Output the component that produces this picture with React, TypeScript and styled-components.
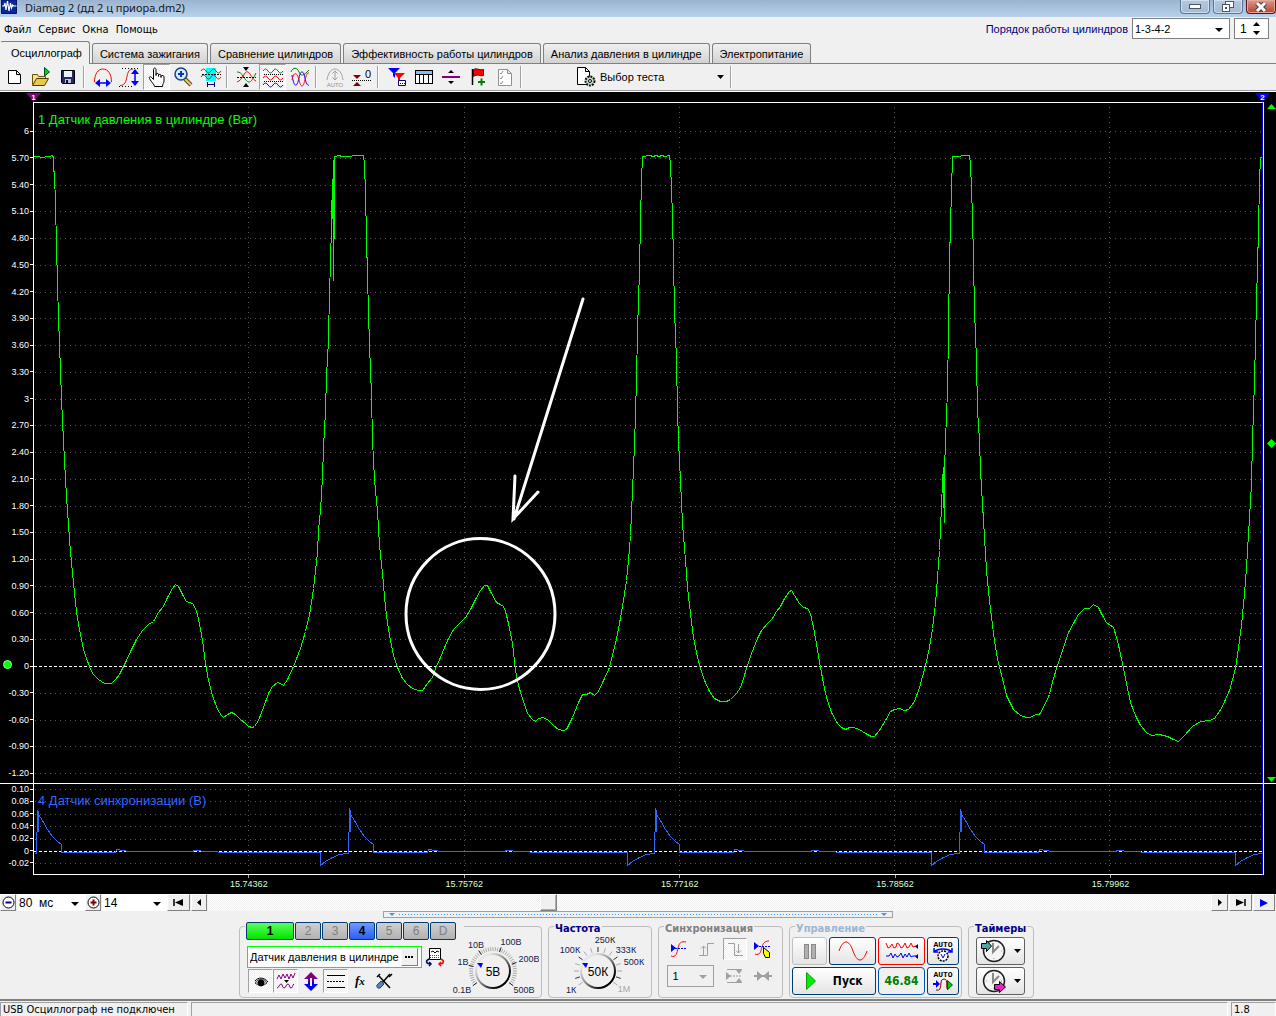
import React, { useState } from 'react';
import styled, { createGlobalStyle, css } from 'styled-components';

const ui = '"Liberation Sans", Arial, sans-serif';
const tahoma = '"DejaVu Sans Condensed", "Noto Sans", Tahoma, sans-serif';
const hatch = css`
  background: conic-gradient(#fff 25%, #efefef 0 50%, #fff 0 75%, #efefef 0) 0 0 / 2px 2px;
`;

const GlobalStyle = createGlobalStyle`
  *, *::before, *::after { box-sizing: border-box; }
  body { margin: 0; background: #f0f0f0; }
  button, input, select { font: inherit; color: inherit; margin: 0; padding: 0; border-radius: 0; }
`;

/* ---------- window frame ---------- */
const Window = styled.div`
  display: flex;
  flex-direction: column;
  height: 100vh;
  overflow: hidden;
  background: #f0f0f0;
  color: #000;
  font: 11px/14px ${ui};
`;
const TitleBar = styled.header`
  display: flex;
  flex: none;
  height: 17px;
  padding-left: 1px;
  gap: 8px;
  background: linear-gradient(#9ab4d0, #b9d1ea);
`;
const Title = styled.h1`
  flex: 1;
  margin: 0;
  font: 11px/15px "Noto Sans", sans-serif;
  color: #16161c;
`;
const WindowButtons = styled.div`
  display: flex;
  gap: 3px;
`;
const WindowButton = styled.button<{ $close?: boolean }>`
  display: flex;
  align-items: center;
  justify-content: center;
  width: 30px;
  height: 14px;
  border: 1px solid ${p => (p.$close ? '#5a1420' : '#5d7590')};
  border-top: 0;
  border-radius: 0 0 4px 4px;
  box-shadow: inset 0 0 0 1px ${p => (p.$close ? '#e5a79b' : '#cfdfef')};
  background: ${p => (p.$close ? 'linear-gradient(#dc9b8d, #b8412f)' : 'linear-gradient(#b4c8de, #a3bbd5)')};
`;

const MenuRow = styled.div`
  display: flex;
  flex: none;
  justify-content: space-between;
  height: 24px;
  padding: 1px 7px 0 0;
`;
const Menu = styled.nav`
  display: flex;
`;
const MenuItem = styled.button`
  border: 0;
  padding: 0 3px 0 4px;
  background: none;
  font: 11px/24px ${tahoma};
`;
const OrderBar = styled.div`
  display: flex;
  gap: 4px;
  height: 21px;
  label { color: #000080; line-height: 22px; font-size: 11px; }
`;
const Combo = styled.div<{ $w: number; $flat?: boolean; $disabled?: boolean }>`
  position: relative;
  width: ${p => p.$w}px;
  border: ${p => (p.$flat ? '0' : `1px solid ${p.$disabled ? '#a0a0a0' : '#7f7f7f'}`)};
  background: ${p => (p.$disabled ? '#f0f0f0' : '#fff')};
  select {
    appearance: none;
    width: 100%;
    height: 100%;
    padding-left: ${p => (p.$disabled ? 5 : 2)}px;
    border: 0;
    background: none;
    opacity: 1;
    color: #000;
  }
  &::after {
    content: '';
    position: absolute;
    right: 6px;
    top: 50%;
    border: 4px solid transparent;
    border-top-color: ${p => (p.$disabled ? '#a0a0a0' : '#000')};
    border-bottom: 0;
    margin-top: -1px;
    pointer-events: none;
  }
`;
const Spinner = styled.div`
  display: flex;
  align-items: center;
  width: 35px;
  border: 1px solid #7f7f7f;
  background: #fff;
  input {
    width: 18px;
    border: 0;
    padding-left: 5px;
    background: none;
    appearance: textfield;
    font-size: 12px;
  }
  input::-webkit-inner-spin-button { appearance: none; }
`;
const SpinButtons = styled.div`
  display: flex;
  flex-direction: column;
`;
const SpinButton = styled.button`
  display: block;
  height: 9px;
  border: 0;
  background: none;
  line-height: 0;
`;

/* ---------- tabs ---------- */
const TabList = styled.div`
  display: flex;
  flex: none;
  align-items: flex-end;
  height: 23px;
  gap: 2px;
  border-bottom: 1px solid #808080;
`;
const Tab = styled.button<{ $active?: boolean }>`
  height: ${p => (p.$active ? 23 : 20)}px;
  padding: ${p => (p.$active ? '0 7px 0 10px' : '0 7px')};
  margin-bottom: ${p => (p.$active ? -1 : 0)}px;
  border: 1px solid #808080;
  border-bottom: 0;
  border-left-color: ${p => (p.$active ? '#f0f0f0' : '#808080')};
  border-radius: 3px 3px 0 0;
  background: ${p => (p.$active ? '#f0f0f0' : 'linear-gradient(#f0f0f0, #d2d2d2)')};
  white-space: nowrap;
  line-height: 18px;
`;

/* ---------- toolbar ---------- */
const Toolbar = styled.div`
  display: flex;
  flex: none;
  height: 28px;
  border-bottom: 1px solid #fff;
  box-shadow: inset 0 -1px #a0a0a0;
  padding-bottom: 1px;
`;
const ToolGroup = styled.div`
  display: flex;
  padding-right: 7px;
  margin-right: 1px;
  background: linear-gradient(90deg, #a0a0a0 1px, #fff 1px) right 3px center / 2px 22px no-repeat;
`;
const ToolButton = styled.button<{ $pressed?: boolean; $w?: number }>`
  display: flex;
  align-items: center;
  justify-content: center;
  width: ${p => p.$w ?? 27}px;
  border: 1px solid transparent;
  background: none;
  ${p => p.$pressed && css`
    ${hatch}
    border-color: #a0a0a0 #fff #fff #a0a0a0;
  `}
`;
const TestPicker = styled.button`
  display: flex;
  align-items: center;
  gap: 4px;
  width: 162px;
  margin-left: 44px;
  padding: 0 8px 0 6px;
  border: 0;
  background: linear-gradient(90deg, #a0a0a0 1px, #fff 1px) right 0 center / 2px 22px no-repeat;
  span { flex: 1; text-align: left; }
`;

/* ---------- scope ---------- */
const Scope = styled.main`
  display: flex;
  flex: 1;
  flex-direction: column;
  min-height: 300px;
  background: #000;
`;
const MarkerRow = styled.div`
  display: flex;
  flex: none;
  justify-content: space-between;
  height: 10px;
  padding: 1px 6px 0 26px;
`;
const Pane = styled.section<{ $share: number; $divided?: boolean }>`
  display: flex;
  flex: ${p => p.$share} 1 0;
  min-height: 0;
  border-top: ${p => (p.$divided ? '1px solid #fff' : '0')};
`;
const Axis = styled.ol<{ $top: number; $bottom: number }>`
  position: relative;
  display: flex;
  flex: none;
  flex-direction: column;
  justify-content: space-between;
  width: 34px;
  margin: 0;
  padding: ${p => p.$top}px 0 ${p => p.$bottom}px;
  border-right: 1px solid #fff;
  list-style: none;
  color: #fff;
  font: 9px/10px ${ui};
`;
const AxisLabel = styled.li`
  display: flex;
  align-items: center;
  justify-content: flex-end;
  gap: 1px;
  height: 10px;
  &::after { content: ''; width: 3px; height: 1px; background: #fff; }
`;
const ZeroDot = styled.span`
  position: absolute;
  left: 3px;
  top: 82%;
  width: 9px;
  height: 9px;
  border: 1px solid #9dff9d;
  border-radius: 50%;
  background: #0f0;
`;
const Plot = styled.div<{ $top?: boolean }>`
  position: relative;
  flex: 1;
  min-width: 0;
  border-top: ${p => (p.$top ? '1px solid #fff' : '0')};
  border-bottom: ${p => (p.$top ? '0' : '1px solid #fff')};
  border-right: 1px solid #0000ff;
  svg { display: block; width: 100%; height: 100%; }
`;
const PlotTitle = styled.h2<{ $color: string }>`
  position: absolute;
  left: 4px;
  top: 9px;
  margin: 0;
  font: 13px/16px ${ui};
  color: ${p => p.$color};
`;
const Strip = styled.div`
  display: flex;
  flex: none;
  flex-direction: column;
  justify-content: space-between;
  align-items: flex-end;
  width: 13px;
  padding: 2px 0 0;
  border-left: 1px solid #fff;
  svg { display: block; }
`;
const TimeAxis = styled.ol`
  display: flex;
  flex: none;
  height: 19px;
  margin: 0 13px 0 34px;
  padding: 0 0 0 8.4%;
  list-style: none;
  color: #d8ffd8;
  font: 9px/12px ${ui};
`;
const TimeLabel = styled.li`
  flex: none;
  width: 19.2%;
  text-align: center;
  &::before { content: ''; display: block; width: 1px; height: 3px; margin: 0 auto; background: #aaa; }
`;

/* ---------- scroll row ---------- */
const ScrollRow = styled.div`
  display: flex;
  flex: none;
  height: 17px;
  font-size: 12px;
`;
const SmallButton = styled.button<{ $w: number }>`
  display: flex;
  align-items: center;
  justify-content: center;
  width: ${p => p.$w}px;
  margin-right: 1px;
  border: 1px solid;
  border-color: #fff #808080 #808080 #fff;
  background: #f0f0f0;
`;
const TrackRange = styled.input`
  appearance: none;
  flex: 1;
  min-width: 0;
  height: 17px;
  outline: 0;
  ${hatch}
  &::-webkit-slider-thumb {
    appearance: none;
    width: 17px;
    height: 17px;
    border: 1px solid;
    border-color: #fff #808080 #808080 #fff;
    box-shadow: inset -1px -1px #b0b0b0;
    background: #f0f0f0;
  }
`;

/* ---------- control dock ---------- */
const Collapse = styled.button`
  display: flex;
  flex: none;
  align-items: center;
  align-self: center;
  justify-content: space-between;
  width: 40%;
  height: 7px;
  padding: 0 5px;
  border: 1px solid #a0a0a0;
  background: #f0f0f0;
  &::before, &::after {
    content: '';
    border: 3px solid transparent;
    border-top-color: #3399ff;
    border-bottom: 0;
  }
  span {
    flex: 1;
    height: 1px;
    margin: 0 4px;
    background: repeating-linear-gradient(90deg, #3399ff 0 1px, transparent 1px 3px);
  }
`;
const Dock = styled.div`
  display: flex;
  flex: none;
  justify-content: center;
  gap: 6px;
  padding: 8px 3px 1px 0;
  border-bottom: 2px solid #808080;
`;
const Group = styled.fieldset<{ $w: number }>`
  width: ${p => p.$w}px;
  height: 72px;
  min-width: 0;
  margin: 0;
  padding: 0;
  border: 1px solid #bdbdbd;
  border-radius: 4px;
`;
const Legend = styled.legend<{ $color?: string }>`
  height: 1px;
  margin-left: 5px;
  padding: 0 1px;
  font: bold 11px/5px "DejaVu Sans Condensed", sans-serif;
  color: ${p => p.$color ?? '#000080'};
`;
const ChannelBar = styled.div`
  display: flex;
  gap: 1px;
  margin-top: -4px;
  padding-right: 7px;
`;
const Channel = styled.button<{ $kind?: 'green' | 'blue' }>`
  width: ${p => (p.$kind === 'green' ? 48 : 26)}px;
  height: 18px;
  border: 1px solid #003c74;
  border-radius: 2px;
  background: ${p =>
    p.$kind === 'green' ? 'linear-gradient(#5cff5c, #00e400)'
    : p.$kind === 'blue' ? 'linear-gradient(#6f9bff, #2a5df5)'
    : 'linear-gradient(#cfcfcf, #b2b2b2)'};
  color: ${p => (p.$kind ? '#000' : '#808080')};
  font: ${p => (p.$kind ? 'bold' : 'normal')} 12px/16px ${ui};
`;
const ChannelBody = styled.div`
  display: flex;
  height: 100%;
`;
const ChannelLeft = styled.div`
  display: flex;
  flex-direction: column;
  width: 205px;
  padding: 19px 0 0 7px;
`;
const NameRow = styled.div`
  display: flex;
  gap: 3px;
`;
const NameBox = styled.div`
  display: flex;
  align-items: center;
  width: 178px;
  height: 22px;
  padding: 2px;
  border: 1px solid #00ff00;
  background: #fff;
  input {
    flex: 1;
    width: 0;
    border: 0;
    background: none;
    font: 11px/16px ${ui};
  }
`;
const PlainButton = styled.button`
  display: flex;
  align-items: center;
  justify-content: center;
  border: 0;
  background: none;
`;
const IconRow = styled.div`
  display: flex;
  height: 25px;
  padding: 1px 0 0 1px;
`;
const KnobArt = styled.svg`
  flex: none;
  display: block;
  margin: -1px 0;
  font: 9px ${ui};
  text-anchor: middle;
`;
const SyncGrid = styled.div`
  display: grid;
  grid-template-columns: repeat(4, 24px);
  column-gap: 4px;
  row-gap: 5px;
  justify-content: center;
  padding-top: 11px;
`;
const Wide = styled.div`
  display: flex;
  grid-column: span 2;
  height: 22px;
  margin-right: 4px;
`;
const ControlGrid = styled.div`
  display: grid;
  grid-template-columns: 35px 47px 47px 32px;
  grid-template-rows: 28px 28px;
  gap: 2px;
  padding: 10px 0 0 2px;
`;
const TimerStack = styled.div`
  display: grid;
  grid-template-rows: 28px 28px;
  gap: 2px;
  padding: 10px 8px 0 7px;
`;
const XpButton = styled.button<{ $span?: number; $line?: string }>`
  display: flex;
  align-items: center;
  justify-content: center;
  gap: 8px;
  grid-column: span ${p => p.$span ?? 1};
  border: 1px solid ${p => p.$line ?? '#003c74'};
  border-radius: 3px;
  background: linear-gradient(#fff, #e4e4e4);
  font: bold 12px/16px "DejaVu Sans Condensed", sans-serif;
`;
const Reading = styled.output`
  display: flex;
  align-items: center;
  justify-content: center;
  border: 1px solid #0054b0;
  border-radius: 4px;
  color: #008000;
  font: bold 12px/16px "DejaVu Sans Condensed", sans-serif;
`;
const StatusBar = styled.footer`
  display: flex;
  flex: none;
  gap: 3px;
  height: 15px;
  padding-top: 1px;
  overflow: hidden;
  font: 11px/14px ${tahoma};
`;
const StatusCell = styled.div<{ $w?: number }>`
  flex: ${p => (p.$w ? `0 0 ${p.$w}px` : '1')};
  padding-left: 2px;
  border-top: 1px solid #a0a0a0;
  border-left: 1px solid #a0a0a0;
  border-right: 1px solid #fff;
  white-space: nowrap;
`;

/* ---------- icons ---------- */
type IconProps = { children: React.ReactNode; size?: number; h?: number; crisp?: boolean };
const Icon = ({ children, size = 24, h, crisp }: IconProps) => (
  <svg width={size} height={h ?? size} viewBox={`0 0 ${size} ${h ?? size}`} fill="none" stroke="#000"
    shapeRendering={crisp ? 'crispEdges' : undefined} aria-hidden="true">{children}</svg>
);
const wave = (y: number, a = 4) => `M2 ${y}q2.5 ${-a} 5 0t5 0t5 0t5 0`;

const icons = {
  create: <Icon><path fill="#fff" d="M6.5 5.5h8l4 4v9h-12z M14.5 5.500v4h4" /></Icon>,
  open: <Icon><path fill="#f5e28a" stroke="#6b5200" d="M3.5 19.5v-10h5l1 2h7v3" /><path fill="#e8c94a" stroke="#4d3b00" d="M3.5 20.5l4-7h12l-4 7z" /><path fill="#00d020" stroke="#064d10" d="M15.5 2.5l5 4.5-5 4z" /></Icon>,
  save: <Icon><path fill="#26266e" d="M5.5 5.5h13v13h-12l-1-1z" /><path stroke="none" fill="#e8f0f8" d="M8 6h8v6H8z" /><path stroke="none" fill="#b8c4d8" d="M9 14h6v4H9z" /><path stroke="none" fill="#111" d="M10 15h2v3h-2z" /></Icon>,
  period: <Icon><path stroke="#f00" d="M3.5 17C3.500 9 7 4 12 4s8.5 5 8.5 13" /><path stroke="#00f" strokeWidth="1.5" d="M6 18h12" /><path fill="#00f" stroke="none" d="M4 18l5-4v8zM20 18l-5-4v8z" /></Icon>,
  amplitude: <Icon><path strokeDasharray="1 2" d="M4 3.5h18M1 21.5h14" /><path stroke="#f00" d="M2 20.5c5 0 6-4 7-9s2-7 6-7.5" /><path stroke="#00f" strokeWidth="1.5" d="M17 6v13" /><path fill="#00f" stroke="none" d="M17 4l4 5h-8zM17 21l4-5h-8z" /></Icon>,
  hand: <Icon><path fill="#fff" d="M8.5 14.5V4.5c0-2 2.500-2 2.500 0v6-1c0-1.5 2.5-1.5 2.5 0v2-1c0-1.5 2.5-1.5 2.5 0v2-1c0-1.5 3-1.5 3 .5v4c0 2-1.5 3-1.5 5.500h-8c0-2-3-4-5-8-1-2 1.5-2.5 2.5-.5z" /></Icon>,
  zoom: <Icon><path stroke="#5a4510" strokeWidth="4" d="M13 14l6 6" /><path stroke="#f0cf66" strokeWidth="2" d="M13 14l6 6" /><circle cx="9" cy="9" r="6" fill="#d7ecff" stroke="#1d3f80" strokeWidth="1.5" /><path stroke="#003bb0" strokeWidth="2" d="M6 9h6M9 6v6" /></Icon>,
  window: <Icon><path fill="#00ffff" stroke="none" d="M7 3h10v13H7z" /><path stroke="#008000" d={wave(6)} /><path stroke="#f00" d={wave(12)} /><path strokeDasharray="2 1" d="M3 9.5h19" /><path stroke="#000080" d="M8.500 17v5M15.500 17v5M8 19.500h8" /></Icon>,
  compress: <Icon><path stroke="#008000" d="M3 7c3 0 4 1 6 4s4 6 6 6 4-3 7-9" /><path stroke="#f00" d="M3 17c3-1 4-3 6-6s3-5 5-4 5 8 8 9" /><path strokeDasharray="2 1" d="M3 12.5h19" /><path fill="#000" stroke="none" d="M9 2h6l-3 4zM9 22h6l-3-4z" /></Icon>,
  separate: <Icon><path stroke="#008000" d={wave(6)} /><path stroke="#f00" d={wave(13)} /><path stroke="#00f" d={wave(20)} /><path strokeDasharray="1 1" d="M3 9.5h19M3 16.5h19" /></Icon>,
  overlay: <Icon><path stroke="#008000" d="M3 7c2-5 6-5 8 0s5 3 8 0l2-2" /><path stroke="#00f" d="M4 10c2 13 5 13 7 3s5-6 6 0 3 8 4 7" /><path stroke="#f00" d="M4 15c2-9 5-8 7 0s4 8 6 0 3-7 4-7" /></Icon>,
  autoScale: <Icon><path stroke="#a0a0a0" d="M4 15C5 8 8 4 12 4s7 4 8 11M12 6v9M9.5 8.5L12 6l2.5 2.500M9.5 12.5L12 15l2.5-2.500" /><text x="12" y="22" fontSize="6" fontFamily="Liberation Sans" textAnchor="middle" fill="#909090" stroke="none">AUTO</text></Icon>,
  zeroLevel: <Icon><path fill="#800000" stroke="none" d="M3 10h8l-4 4zM3 21h8l-4-4z" /><path strokeDasharray="1 1" d="M2 15.5h19" /><text x="18" y="13" fontSize="11" fontFamily="Liberation Sans" textAnchor="middle" fill="#000" stroke="none">0</text></Icon>,
  filter: <Icon><path fill="#00f" stroke="none" d="M3 3h12l-5 5v5l-2-2V8z" /><path fill="#f00" stroke="none" d="M9 8h11l-5 5v5l-2-2v-3z" /><path fill="#fff" stroke="#000080" d="M13.5 15.5h7v5h-7z" /><path stroke="#000080" strokeDasharray="1 1" d="M15 18.5h5" /></Icon>,
  table: <Icon crisp><path fill="#fff" d="M3.5 5.5h17v13h-17z" /><path fill="#8cb8f0" stroke="none" d="M4 6h16v3H4z" /><path d="M3.500 9.500h17M7.500 10v8M11.500 10v8M16.500 10v8" /></Icon>,
  splitter: <Icon><path stroke="#800080" strokeWidth="2" d="M3 12h18" /><path fill="#000" stroke="none" d="M9 8h6l-3-3zM9 16h6l-3 3z" /></Icon>,
  flag: <Icon><path strokeWidth="1.5" d="M6.5 4v16" /><path fill="#f00" stroke="#600" d="M7.5 4.5c3-2 5 1 10 0v6c-4 1-6-2-10 1z" /><path stroke="#008000" strokeWidth="2" d="M12 17h7M15.5 13.5v7" /></Icon>,
  checklist: <Icon><path fill="#fff" stroke="#909090" d="M5.5 4.5h9l4 4v12h-13zM14.5 4.5v4h4" /><path stroke="#909090" d="M7 8l1 1 2-3M7 13l1 1 2-3M7 18l1 1 2-3" /></Icon>,
};

const ArrowDown = ({ color = '#000' }: { color?: string }) => (
  <Icon size={7} h={4}><path fill={color} stroke="none" d="M0 0h7L3.5 4z" /></Icon>
);

const toolGroups: { name: string; icon: React.ReactNode; on?: boolean }[][] = [
  [{ name: 'Новый', icon: icons.create }, { name: 'Открыть', icon: icons.open }, { name: 'Сохранить', icon: icons.save }],
  [{ name: 'Период', icon: icons.period }, { name: 'Амплитуда', icon: icons.amplitude }, { name: 'Рука', icon: icons.hand, on: true }, { name: 'Масштаб', icon: icons.zoom }, { name: 'Окно', icon: icons.window }],
  [{ name: 'Сжать', icon: icons.compress }, { name: 'Раздельно', icon: icons.separate, on: true }, { name: 'Вместе', icon: icons.overlay }],
  [{ name: 'Автомасштаб', icon: icons.autoScale }, { name: 'Ноль', icon: icons.zeroLevel }],
  [{ name: 'Фильтр', icon: icons.filter }, { name: 'Таблица', icon: icons.table }, { name: 'Разделитель', icon: icons.splitter }, { name: 'Флаг', icon: icons.flag }, { name: 'Список', icon: icons.checklist }],
];

/* ---------- signal data ---------- */
const pressure = `34,156 44,157 45,156 50,156 51,155 53,156 53,170 54,172 55,205 56,244 57,284 58,317 59,344 60,371 61,398 62,421 63,440 64,460 65,479 66,496 67,511 68,524 69,539 70,551 71,562 72,572 73,583 74,592 75,602 76,611 77,618 79,629 81,639 83,649 86,658 89,666 92,673 98,679 101,681 104,683 108,683 111,683 115,679 119,674 123,666 126,660 131,649 136,639 142,630 148,624 153,621 158,612 163,606 167,597 172,588 175,584 178,586 182,594 186,601 192,603 195,608 197,614 200,629 202,640 205,663 208,680 212,695 217,709 221,715 223,717 227,714 231,712 235,714 240,719 245,723 248,726 252,727 254,726 258,720 263,707 268,693 272,686 277,682 280,683 283,685 287,679 293,666 300,648 305,631 309,615 313,588 315,570 317,552 318,529 320,510 322,477 323,447 325,411 326,376 328,340 329,290 330,265 331,222 332,179 332,218 333,160 333,280 334,200 334,156 339,155 341,156 363,155 364,163 365,194 366,236 367,276 368,311 369,345 371,395 372,440 374,479 377,511 379,545 382,573 385,607 387,622 390,640 393,655 397,667 402,678 407,684 412,688 418,690 422,690 427,683 432,677 435,668 440,657 447,640 453,629 458,624 465,617 470,609 475,599 480,590 484,585 487,585 490,591 496,602 500,604 503,606 505,611 508,623 512,643 515,670 518,685 522,698 527,713 532,719 535,721 538,718 543,717 548,720 553,725 558,729 563,730 566,729 572,717 578,702 582,694 586,694 590,692 594,695 598,691 603,680 609,667 615,643 619,623 623,600 626,580 628,560 630,535 632,490 634,445 636,380 637,330 639,270 640,220 641,180 642,156 650,155 652,156 656,155 658,156 662,155 664,156 669,155 670,163 672,215 673,260 674,310 676,360 677,410 678,440 680,480 682,523 685,560 687,587 690,613 693,637 696,652 699,665 704,680 709,691 714,698 720,701 726,701 730,699 736,693 740,687 743,678 747,665 751,653 757,638 761,630 767,623 772,618 776,611 780,606 784,598 789,591 791,590 794,595 799,603 803,607 807,608 810,613 813,627 816,643 820,667 823,683 826,697 831,712 837,723 841,727 845,729 849,727 853,727 859,729 865,733 871,736 874,736 879,730 885,720 890,711 894,709 899,708 904,710 908,709 914,701 919,687 925,665 929,647 932,628 935,603 937,577 939,550 940,527 941,507 942,480 943,467 943,493 944,522 944,470 945,440 947,390 948,330 949,260 951,190 952,156 969,155 970,163 972,215 973,260 974,310 976,360 977,410 979,440 980,470 983,520 986,570 989,600 993,633 996,653 999,667 1003,682 1006,695 1013,709 1020,715 1026,717 1030,717 1035,714 1039,714 1043,707 1049,694 1053,678 1057,665 1062,650 1068,632 1074,621 1078,614 1084,608 1089,608 1093,604 1098,607 1102,615 1106,622 1113,627 1117,640 1122,663 1126,683 1130,702 1135,715 1140,725 1146,732 1151,735 1159,734 1167,736 1173,739 1178,741 1184,735 1192,726 1200,721 1209,720 1214,718 1221,708 1229,690 1235,668 1238,647 1241,625 1244,593 1246,567 1249,517 1251,483 1252,440 1254,380 1256,300 1258,230 1259,180 1260,157 1263,157`;
const pulse = (x: number, top: number) =>
  `${x - 1},853 ${x - 1},832 ${x},831 ${x},${top} ${x + 1},812 ${x + 1},831 ${x + 1},814 ${x + 5},820 ${x + 10},829 ${x + 15},836 ${x + 20},841 ${x + 24},844 ${x + 24},852 ${x + 50},852 ${x + 78},852 ${x + 79},849 ${x + 92},851 ${x + 155},851 ${x + 157},850 ${x + 170},851 ${x + 190},852`;
const dip = (x: number) => `${x},852 ${x},865 ${x + 5},861 ${x + 12},857 ${x + 19},854 ${x + 27},853`;
const sync = ['34,853', pulse(37, 810), dip(320), pulse(349, 808), dip(627), pulse(655, 808), dip(931), pulse(960, 809), dip(1235)].join(' ');

const mainScale = ['6', '5.70', '5.40', '5.10', '4.80', '4.50', '4.20', '3.90', '3.60', '3.30', '3', '2.70', '2.40', '2.10', '1.80', '1.50', '1.20', '0.90', '0.60', '0.30', '0', '-0.30', '-0.60', '-0.90', '-1.20'];
const syncScale = ['0.10', '0.08', '0.06', '0.04', '0.02', '0', '-0.02'];
const times = ['15.74362', '15.75762', '15.77162', '15.78562', '15.79962'];
const gridX = [248, 464, 679, 894, 1109];

const Grid = ({ rows, top, bottom, zero }: { rows: number[]; top: number; bottom: number; zero: number }) => (
  <g shapeRendering="crispEdges" stroke="#585858" strokeDasharray="1 4">
    {rows.filter(y => y !== zero).map(y => <path key={y} d={`M35 ${y + 0.5}H1262`} />)}
    {gridX.map(x => <path key={x} d={`M${x + 0.5} ${top}V${bottom}`} />)}
    <path stroke="#fff" strokeDasharray="3 2" d={`M34 ${zero + 0.5}H1262`} />
  </g>
);

/* ---------- dials ---------- */
type Mark = [text: string, x: number, y: number, dim?: boolean];
const Dial = ({ width, cx, value, marks, dense }: { width: number; cx: number; value: string; marks: Mark[]; dense?: boolean }) => {
  const id = dense ? 'rimVolt' : 'rimFreq';
  const step = dense ? 6 : 18;
  const ticks = Array.from({ length: 252 / step + 1 }, (_, i) => 144 + i * step);
  const at = (deg: number, r: number) => `${cx + r * Math.cos(deg * Math.PI / 180)} ${45 + r * Math.sin(deg * Math.PI / 180)}`;
  return (
    <KnobArt width={width} height={72} viewBox={`0 0 ${width} 72`} role="img" aria-label={value}>
      <defs>
        <linearGradient id={id} x1="0" y1="0" x2="1" y2="1">
          <stop offset="0.2" stopColor="#e4e4e4" /><stop offset="0.5" stopColor="#888" /><stop offset="0.8" stopColor="#000" />
        </linearGradient>
      </defs>
      {ticks.map((d, i) => (
        <path key={d} stroke={!dense && i % 3 === 1 ? '#333' : '#a8a8a8'} strokeWidth={1} d={`M${at(d, dense ? 20 : 19)}L${at(d, 24)}`} />
      ))}
      {dense && [144, 193, 235, 289, 340, 36].map(d => <path key={d} stroke="#222" d={`M${at(d, 20)}L${at(d, 25)}`} />)}
      <circle cx={cx} cy={45} r={17} fill="#f0f0f0" stroke={`url(#${id})`} strokeWidth={2} />
      <path fill="#00f" d={`M${cx - 16} 37h6l-2 5z`} />
      <text x={cx} y={50} fontSize={12}>{value}</text>
      {marks.map(([t, x, y, dim]) => <text key={t} x={x} y={y} fill={dim ? '#a8a8a8' : '#16224a'}>{t}</text>)}
    </KnobArt>
  );
};

const Clock = ({ color, out }: { color: string; out?: boolean }) => (
  <Icon size={26}>
    <circle cx="14" cy="13" r="10.5" fill="#f4f4f4" stroke="#202020" strokeWidth="1.5" />
    <path stroke="#888" strokeWidth="2" d="M13 5v9l6-6" />
    <path stroke="#999" d="M14 21v-1M22 13h-1M6 13h1" />
    <path fill={color} d={out ? 'M14.5 16.5h5v-3l6 5.5-6 5.5v-3h-5z' : 'M1.5 5.5h5v-3l5 5.5-5 5.5v-3h-5z'} />
  </Icon>
);

const AutoText = () => (
  <text x="12" y="8" fontSize="8" fontWeight="bold" fontFamily="Liberation Mono" textAnchor="middle" fill="#000" stroke="none">AUTO</text>
);

const tabs = ['Осциллограф', 'Система зажигания', 'Сравнение цилиндров', 'Эффективность работы цилиндров', 'Анализ давления в цилиндре', 'Электропитание'];

export default function App() {
  const [active, setActive] = useState(0);
  const [cyl, setCyl] = useState(1);
  return (
    <>
      <GlobalStyle />
      <Window>
        <TitleBar>
          <Icon size={16} h={15}>
            <path fill="#0a2a9c" stroke="#06145a" d="M.5 0h15v13.5H.5z" />
            <path stroke="#fff" strokeWidth="1.2" d="M1 6h2l1-3 1 7 1.5-9 1.5 10 1.5-8 1 5 1-3 1 1h3" />
          </Icon>
          <Title>Diamag 2 (дд 2 ц приора.dm2)</Title>
          <WindowButtons>
            <WindowButton aria-label="Свернуть"><Icon size={12} h={5} crisp><path fill="#fff" stroke="#4c5560" d="M.5.5h11v4H.5z" /></Icon></WindowButton>
            <WindowButton aria-label="Восстановить"><Icon size={12} h={11} crisp><path fill="#fff" stroke="#4c5560" d="M3.5.5h8v6h-8z" /><path fill="#fff" stroke="#4c5560" d="M.5 3.5h7v7H.5z" /><path fill="#9ab" stroke="#4c5560" d="M3.5 6.5h1v1h-1z" /></Icon></WindowButton>
            <WindowButton $close aria-label="Закрыть"><Icon size={12} h={10}><path stroke="#50363a" strokeWidth="5" d="M2 1l8 8M10 1L2 9" /><path stroke="#fff" strokeWidth="3" d="M2 1l8 8M10 1L2 9" /></Icon></WindowButton>
          </WindowButtons>
        </TitleBar>

        <MenuRow>
          <Menu>{['Файл', 'Сервис', 'Окна', 'Помощь'].map(m => <MenuItem key={m}>{m}</MenuItem>)}</Menu>
          <OrderBar>
            <label htmlFor="order">Порядок работы цилиндров</label>
            <Combo $w={98}><select id="order" defaultValue="1-3-4-2"><option>1-3-4-2</option><option>1-2-4-3</option></select></Combo>
            <Spinner>
              <input type="number" aria-label="Цилиндр" value={cyl} onChange={e => setCyl(Number(e.target.value))} />
              <SpinButtons>
                <SpinButton aria-label="Больше" onClick={() => setCyl(cyl + 1)}><Icon size={7} h={4}><path fill="#000" stroke="none" d="M0 4h7L3.5 0z" /></Icon></SpinButton>
                <SpinButton aria-label="Меньше" onClick={() => setCyl(Math.max(1, cyl - 1))}><ArrowDown /></SpinButton>
              </SpinButtons>
            </Spinner>
          </OrderBar>
        </MenuRow>

        <TabList role="tablist">
          {tabs.map((t, i) => <Tab key={t} role="tab" aria-selected={i === active} $active={i === active} onClick={() => setActive(i)}>{t}</Tab>)}
        </TabList>

        <Toolbar>
          {toolGroups.map((g, i) => (
            <ToolGroup key={i}>
              {g.map(t => <ToolButton key={t.name} aria-label={t.name} $pressed={t.on}>{t.icon}</ToolButton>)}
            </ToolGroup>
          ))}
          <TestPicker>
            <Icon size={20}><path fill="#fff" d="M1.5.5h8l4 4v13h-12zM9.5.5v4h4" /><circle cx="14" cy="14" r="4.5" fill="#c4dcc4" stroke="#111" strokeWidth="2" strokeDasharray="2 1" /><circle cx="14" cy="14" r="1.5" fill="#fff" /></Icon>
            <span>Выбор теста</span>
            <ArrowDown />
          </TestPicker>
        </Toolbar>

        <Scope>
          <MarkerRow>
            <svg width="15" height="9"><path fill="#800080" d="M0 0h15L8 8v1H7V8z" /><text x="7.5" y="7" fontSize="8" fontWeight="bold" fontFamily="Liberation Sans" textAnchor="middle" fill="#fff">1</text></svg>
            <svg width="15" height="9"><path fill="#0000ff" d="M0 0h15L8 8v1H7V8z" /><text x="7.5" y="7" fontSize="8" fontWeight="bold" fontFamily="Liberation Sans" textAnchor="middle" fill="#fff">2</text></svg>
          </MarkerRow>
          <Pane $share={681}>
            <Axis $top={24} $bottom={5}>
              {mainScale.map(v => <AxisLabel key={v}>{v}</AxisLabel>)}
              <ZeroDot />
            </Axis>
            <Plot $top>
              <svg viewBox="34 103 1228 680" preserveAspectRatio="none" role="img" aria-label="Осциллограмма давления">
                <Grid rows={mainScale.map((_, i) => Math.round(131 + i * 26.75))} top={107} bottom={781} zero={666} />
                <polyline points={pressure} fill="none" stroke="#00ff00" shapeRendering="crispEdges" transform="translate(.5 .5)" />
                <g fill="none" stroke="#fff" strokeWidth="3" strokeLinecap="round">
                  <ellipse cx="480.5" cy="614" rx="74.5" ry="75.5" />
                  <path d="M583 299L514 519M515 476L513 519L538 492" />
                </g>
              </svg>
              <PlotTitle $color="#00ff00">1 Датчик давления в цилиндре (Bar)</PlotTitle>
            </Plot>
            <Strip>
              <svg width="9" height="5"><path fill="#0f0" d="M0 5h9L4.5 0z" /></svg>
              <svg width="9" height="9"><path fill="#0f0" d="M4.5 0L9 4.5 4.5 9 0 4.5z" /></svg>
              <svg width="9" height="6"><path fill="#0f0" d="M0 0h9L4.5 5z" /></svg>
            </Strip>
          </Pane>
          <Pane $share={91} $divided>
            <Axis $top={0} $bottom={7}>{syncScale.map(v => <AxisLabel key={v}>{v}</AxisLabel>)}</Axis>
            <Plot>
              <svg viewBox="34 784 1228 90" preserveAspectRatio="none" role="img" aria-label="Осциллограмма синхронизации">
                <Grid rows={[789, 801, 814, 826, 839, 851, 863]} top={785} bottom={873} zero={851} />
                <polyline points={sync} fill="none" stroke="#2f66ff" shapeRendering="crispEdges" transform="translate(.5 .5)" />
              </svg>
              <PlotTitle $color="#3366ff">4 Датчик синхронизации (В)</PlotTitle>
            </Plot>
            <Strip />
          </Pane>
          <TimeAxis>{times.map(t => <TimeLabel key={t}>{t}</TimeLabel>)}</TimeAxis>
        </Scope>

        <ScrollRow>
          <SmallButton $w={16} aria-label="Уменьшить"><Icon size={13}><circle cx="6.5" cy="6.5" r="5.5" fill="#fff" /><path stroke="#000080" strokeWidth="2" d="M3.5 6.5h6" /></Icon></SmallButton>
          <Combo $w={68} $flat><select aria-label="Развёртка"><option>80&nbsp; мс</option></select></Combo>
          <SmallButton $w={16} aria-label="Увеличить"><Icon size={13}><circle cx="6.5" cy="6.5" r="5.5" fill="#fff" /><path stroke="#800000" strokeWidth="2" d="M3.5 6.5h6M6.5 3.5v6" /></Icon></SmallButton>
          <Combo $w={65} $flat><select aria-label="Масштаб"><option>14</option></select></Combo>
          <SmallButton $w={23} aria-label="В начало"><Icon size={11} h={7}><path strokeWidth="1.5" d="M1 0v7" /><path fill="#000" stroke="none" d="M2 3.5L10 0v7z" /></Icon></SmallButton>
          <SmallButton $w={16} aria-label="Назад"><Icon size={4} h={7}><path fill="#000" stroke="none" d="M4 0v7L0 3.5z" /></Icon></SmallButton>
          <TrackRange type="range" min={0} max={1000} defaultValue={337} aria-label="Прокрутка" />
          <SmallButton $w={17} aria-label="Вперёд"><Icon size={4} h={7}><path fill="#000" stroke="none" d="M0 0v7l4-3.5z" /></Icon></SmallButton>
          <SmallButton $w={23} aria-label="В конец"><Icon size={11} h={7}><path strokeWidth="1.5" d="M10 0v7" /><path fill="#000" stroke="none" d="M9 3.5L1 0v7z" /></Icon></SmallButton>
          <SmallButton $w={22} aria-label="Воспроизвести"><Icon size={8}><path fill="#00f" stroke="none" d="M0 0v8l8-4z" /></Icon></SmallButton>
        </ScrollRow>

        <Collapse aria-label="Свернуть панель"><span /></Collapse>

        <Dock>
          <Group $w={303}>
            <Legend>
              <ChannelBar>
                <Channel $kind="green">1</Channel><Channel>2</Channel><Channel>3</Channel><Channel $kind="blue">4</Channel>
                <Channel>5</Channel><Channel>6</Channel><Channel>D</Channel>
              </ChannelBar>
            </Legend>
            <ChannelBody>
              <ChannelLeft>
                <NameRow>
                  <NameBox>
                    <input aria-label="Имя канала" defaultValue="Датчик давления в цилиндре" />
                    <SmallButton $w={17} aria-label="Выбрать"><Icon size={9} h={16}><path strokeWidth="2" strokeDasharray="2 1" d="M0 8h8" /></Icon></SmallButton>
                  </NameBox>
                  <PlainButton aria-label="Сменить датчик">
                    <Icon size={20}><path fill="#fff" d="M4.5 1.5h11v11h-11z" /><path stroke="#080" strokeDasharray="1 1" d="M5 8.5h10M5 10.5h10" /><path d="M6 5l2-1 2 2 2-2 2 1" /><path stroke="#000080" strokeWidth="1.5" d="M4 12c-4 2-3 5 2 5m-2-2l2 2-2 2" /><path stroke="#f00" strokeWidth="1.5" d="M16 12c4 2 3 5-2 5m2-2l-2 2 2 2" /></Icon>
                  </PlainButton>
                </NameRow>
                <IconRow>
                  <ToolButton $w={25} $pressed aria-label="Видимость"><Icon size={20}><path fill="#bbb" stroke="#444" d="M4 12c3-5 9-5 12 0-3 3-9 3-12 0z" /><circle cx="10" cy="12" r="3" fill="#000" /><path d="M4 10c3-4 9-4 13 1" /></Icon></ToolButton>
                  <ToolButton $w={25} $pressed aria-label="Сглаживание"><Icon size={20}><path stroke="#800080" d="M1 8l2-4 2 4 2-5 2 4 2-4 2 5 2-5 2 4 2-5M1 17c2 0 2-4 4-4s1 4 3 4 2-4 4-4 1 4 3 4 1-3 3-4" /><path fill="#000" stroke="none" d="M8 9h5l-2.5 3z" /></Icon></ToolButton>
                  <ToolButton $w={25} aria-label="Сдвиг"><Icon size={20}><path fill="#800080" stroke="none" d="M10 1l7 7h-4v3H7V8H3z" /><path fill="#00f" stroke="none" d="M10 20l7-7h-4v-3H7v3H3z" /><path stroke="#f0f0f0" strokeWidth="2" d="M10 7v8" /></Icon></ToolButton>
                  <ToolButton $w={25} $pressed aria-label="Уровни"><Icon size={20} crisp><path d="M1 4.5h18M1 16.5h18" /><path strokeDasharray="2 1" d="M1 10.5h18" /></Icon></ToolButton>
                  <ToolButton $w={25} aria-label="Функция"><Icon size={20}><text x="4" y="14" fontSize="13" fontWeight="bold" fontStyle="italic" fontFamily="Liberation Serif" fill="#000" stroke="none">f<tspan fontSize="11">x</tspan></text></Icon></ToolButton>
                  <ToolButton $w={22} aria-label="Настройки"><Icon size={20}><path strokeWidth="1.5" d="M5 5l11 12" /><path d="M16 3L8 12" strokeWidth="1.5" /><path fill="#5a82c0" stroke="#28406e" d="M3 14l4-4 3 3-4 4c-2 1-4-1-3-3z" /><path d="M3 6l3-3M15 6l3-3" strokeWidth="1.5" /></Icon></ToolButton>
                </IconRow>
              </ChannelLeft>
              <Dial dense width={94} cx={48} value="5В" marks={[['10В', 31, 22], ['100В', 66, 19], ['1В', 18, 39], ['200В', 84, 36], ['0.1В', 17, 67], ['500В', 79, 67]]} />
            </ChannelBody>
          </Group>

          <Group $w={104}>
            <Legend>Частота</Legend>
            <Dial width={102} cx={49} value="50К" marks={[['100К', 21, 27], ['250К', 56, 17], ['333К', 77, 27], ['500К', 85, 39], ['1К', 22, 67], ['1М', 75, 66, true]]} />
          </Group>

          <Group $w={125}>
            <Legend $color="#808080">Синхронизация</Legend>
            <SyncGrid>
              <ToolButton $w={24} aria-label="Уровень"><Icon size={20}><path stroke="#f00" d="M2 17c5 2 6-3 7-8s3-7 8-6" /><path stroke="#00f" strokeDasharray="2 1" d="M3 9.5h15" /><path fill="#00f" stroke="none" d="M2 5l5 4-5 4z" /></Icon></ToolButton>
              <ToolButton $w={24} aria-label="Фронт"><Icon size={20}><path stroke="#a0a0a0" d="M2 16.5h8.5v-12H17M6.5 7v9M4 9.5L6.5 7 9 9.5" /></Icon></ToolButton>
              <ToolButton $w={24} $pressed aria-label="Спад"><Icon size={20}><path stroke="#a0a0a0" d="M3 4.5h6.5v12H18M13.5 5v9M11 11.5l2.5 2.5 2.5-2.5" /></Icon></ToolButton>
              <ToolButton $w={24} aria-label="Выбор уровня"><Icon size={20}><path stroke="#f00" d="M2 15c5 2 6-3 7-7s3-6 7-6" /><path stroke="#00f" strokeDasharray="2 1" d="M3 7.5h15" /><path fill="#00f" stroke="none" d="M1 3l5 4-5 4z" /><path fill="#ff0" d="M10.5 8.5l6 5v5h-4l-2-4z" /></Icon></ToolButton>
              <Wide><Combo $w={47} $disabled><select disabled aria-label="Канал синхронизации"><option>1</option></select></Combo></Wide>
              <ToolButton $w={24} aria-label="Диапазон"><Icon size={20} h={18}><path stroke="#a0a0a0" d="M2 2.5h15M2 15.5h15" /><path stroke="#a0a0a0" strokeDasharray="2 1" d="M2 9h15" /><path fill="#a0a0a0" stroke="none" d="M1 5l5 4-5 4zM11 3h6l-3 4zM11 15h6l-3-4z" /></Icon></ToolButton>
              <ToolButton $w={24} aria-label="К центру"><Icon size={20} h={18}><path stroke="#a0a0a0" strokeWidth="2" d="M1 9h18" /><path fill="#a0a0a0" stroke="none" d="M4 4l6 5-6 5zM16 4l-6 5 6 5z" /></Icon></ToolButton>
            </SyncGrid>
          </Group>

          <Group $w={173}>
            <Legend $color="#9db6d4">Управление</Legend>
            <ControlGrid>
              <XpButton $line="#c0c0c0" aria-label="Пауза"><Icon size={12} h={15} crisp><path fill="#b0b0b0" stroke="#888" d="M.5.5h4v14h-4zM7.5.5h4v14h-4z" /></Icon></XpButton>
              <XpButton aria-label="Синусоида"><Icon size={30} h={20}><path stroke="#f00" d="M1 10C5-2 11-2 15 10s10 12 14 0" /></Icon></XpButton>
              <XpButton $line="#ff0000" aria-label="Две кривые"><Icon size={34} h={20}><path stroke="#f00" d="M1 2l2 5 2-1 2-3 2 4 2-1 1-4 2 1 2 4 2-1 2-4 2 5 2-1 2-4 2 4 3-1" /><path stroke="#00f" d="M1 15h3l2-3 2 5 2-4 2 3 2-1 2-3 2 5 2-4 2 3 2-4 2 4 2-1h3" /><path fill="#000080" stroke="none" d="M33 3v5l-3-2.500zM33 13v5l-3-2.500z" /></Icon></XpButton>
              <XpButton aria-label="Авто напряжение"><Icon size={24}><AutoText /><path stroke="#00f" strokeWidth="1.5" d="M3 13c4-4 14-4 18 0M3 9v4h4M21 9v4h-4" /><circle cx="12" cy="17" r="5" fill="#fff" strokeWidth="1.5" strokeDasharray="2 1" /><path stroke="#00f" d="M10 15l2 4 2-4" /></Icon></XpButton>
              <XpButton $span={2}><Icon size={12} h={20}><path fill="#00f000" stroke="#0a9a0a" d="M1.5 1.5v17l9-8.5z" /></Icon><span>&nbsp; Пуск</span></XpButton>
              <Reading>46.84</Reading>
              <XpButton aria-label="Авто запуск"><Icon size={24}><AutoText /><path fill="#00f" stroke="none" d="M2 14h3v-3l4 4-4 4v-3H2z" /><path stroke="#800000" d="M5 21c8 2 2-11 8-11 5 0 1 9 4 11" /><path fill="#0c0" stroke="#050" d="M16.5 11.5v9l5-4.5z" /></Icon></XpButton>
            </ControlGrid>
          </Group>

          <Group $w={66}>
            <Legend>Таймеры</Legend>
            <TimerStack>
              <XpButton $line="#606060" aria-label="Таймер пуска"><Clock color="#4aa8a0" /><ArrowDown /></XpButton>
              <XpButton $line="#606060" aria-label="Таймер остановки"><Clock out color="#f020c0" /><ArrowDown /></XpButton>
            </TimerStack>
          </Group>
        </Dock>

        <StatusBar>
          <StatusCell $w={188}>USB Осциллограф не подключен</StatusCell>
          <StatusCell />
          <StatusCell $w={45}>1.8</StatusCell>
        </StatusBar>
      </Window>
    </>
  );
}
